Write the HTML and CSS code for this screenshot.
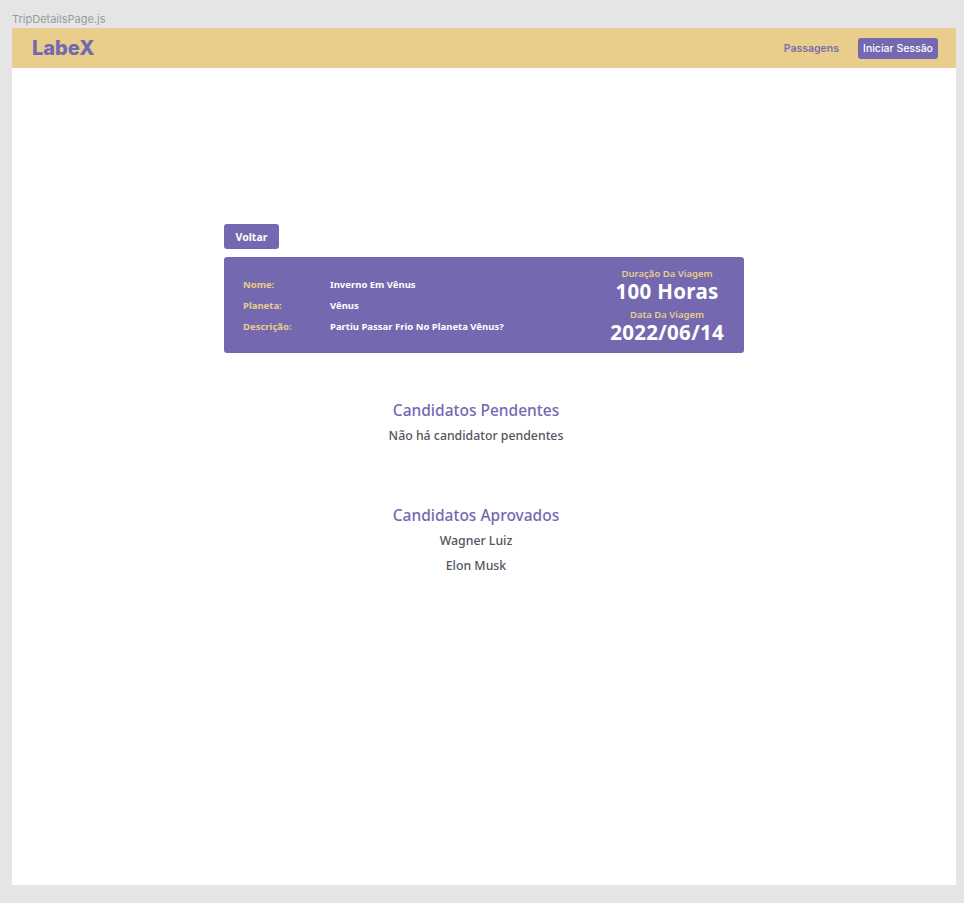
FILE: index.html
```html
<!DOCTYPE html>
<html lang="pt">
<head>
<meta charset="utf-8">
<title>TripDetailsPage</title>
<link rel="stylesheet" href="styles.css">
</head>
<body>
<div class="file-label">TripDetailsPage.js</div>
<div class="frame">
  <header class="topbar">
    <div class="logo">LabeX</div>
    <nav class="nav">
      <span class="nav-link">Passagens</span>
      <button class="nav-btn">Iniciar Sessão</button>
    </nav>
  </header>
  <main class="content">
    <div class="trip">
      <button class="back-btn">Voltar</button>
      <section class="card">
        <div class="info">
          <div class="row"><span class="label">Nome:</span><span class="value">Inverno Em Vênus</span></div>
          <div class="row"><span class="label">Planeta:</span><span class="value">Vênus</span></div>
          <div class="row"><span class="label">Descrição:</span><span class="value">Partiu Passar Frio No Planeta Vênus?</span></div>
        </div>
        <div class="stats">
          <div class="stat-label">Duração Da Viagem</div>
          <div class="stat-value">100 Horas</div>
          <div class="stat-label second">Data Da Viagem</div>
          <div class="stat-value">2022/06/14</div>
        </div>
      </section>
    </div>
    <section class="candidates">
      <h2 class="title">Candidatos Pendentes</h2>
      <p class="item">Não há candidator pendentes</p>
    </section>
    <section class="candidates approved">
      <h2 class="title">Candidatos Aprovados</h2>
      <p class="item">Wagner Luiz</p>
      <p class="item">Elon Musk</p>
    </section>
  </main>
</div>
</body>
</html>
```

FILE: styles.css
```css
* { box-sizing: border-box; }
html, body { margin: 0; padding: 0; }
body {
  background: #e5e5e5;
  font-family: "Noto Sans", "Open Sans", sans-serif;
  padding: 0 8px 18px 12px;
}
.file-label {
  font-family: "Inter", Roboto, sans-serif;
  font-size: 11px;
  color: #9a9a9a;
  height: 28px;
  padding-top: 12px;
  line-height: 14px;
}
.frame {
  width: 944px;
  height: 857px;
  background: #ffffff;
  display: flex;
  flex-direction: column;
}
.topbar {
  height: 40px;
  background: #e9cd8a;
  display: flex;
  align-items: center;
  justify-content: space-between;
  padding: 0 18px 0 20px;
  font-family: "Inter", Roboto, sans-serif;
}
.logo {
  font-family: "Inter", Roboto, sans-serif;
  font-size: 20px;
  font-weight: 800;
  color: #7469b0;
}
.nav { display: flex; align-items: center; gap: 19px; }
.nav-link {
  font-size: 10.5px;
  font-weight: 600;
  color: #7a6fac;
}
.nav-btn {
  font-family: "Inter", Roboto, sans-serif;
  font-size: 10.5px;
  font-weight: 500;
  color: #ffffff;
  background: #7469b0;
  border: none;
  border-radius: 3px;
  width: 80px;
  height: 21px;
  padding: 0;
}
.content {
  display: flex;
  flex-direction: column;
  align-items: center;
  padding-top: 156px;
}
.trip {
  width: 520px;
  display: flex;
  flex-direction: column;
  align-items: flex-start;
  gap: 8px;
}
.back-btn {
  font-family: "Noto Sans", sans-serif;
  font-size: 10.5px;
  font-weight: 700;
  color: #ffffff;
  background: #7469b0;
  border: none;
  border-radius: 3px;
  width: 55px;
  height: 25px;
  padding: 0;
}
.card {
  width: 520px;
  height: 96px;
  background: #7469b0;
  border-radius: 3px;
  display: flex;
  justify-content: space-between;
  align-items: center;
  padding: 0 20px 0 19px;
}
.info { display: flex; flex-direction: column; gap: 7px; }
.row { display: flex; align-items: center; height: 14px; }
.label {
  width: 87px;
  font-size: 9.5px;
  font-weight: 700;
  color: #e9cd8a;
}
.value {
  font-size: 9.5px;
  font-weight: 700;
  color: #ffffff;
}
.stats {
  display: flex;
  flex-direction: column;
  align-items: center;
}
.stat-label {
  font-size: 9.5px;
  font-weight: 600;
  color: #e9cd8a;
  line-height: 12px;
}
.stat-label.second { margin-top: 7px; }
.stat-value {
  font-size: 20.5px;
  font-weight: 700;
  color: #ffffff;
  line-height: 22px;
  letter-spacing: 0.3px;
}
.candidates {
  display: flex;
  flex-direction: column;
  align-items: center;
  padding-right: 16px;
  margin-top: 46px;
  width: 100%;
}
.candidates.approved { margin-top: 54px; }
.title {
  margin: 0 0 4px 0;
  font-size: 15.5px;
  font-weight: 500;
  color: #7469b0;
  line-height: 22px;
}
.item {
  margin: 0 0 4px 0;
  font-size: 12.3px;
  font-weight: 500;
  color: #55545e;
  line-height: 21px;
}
```
